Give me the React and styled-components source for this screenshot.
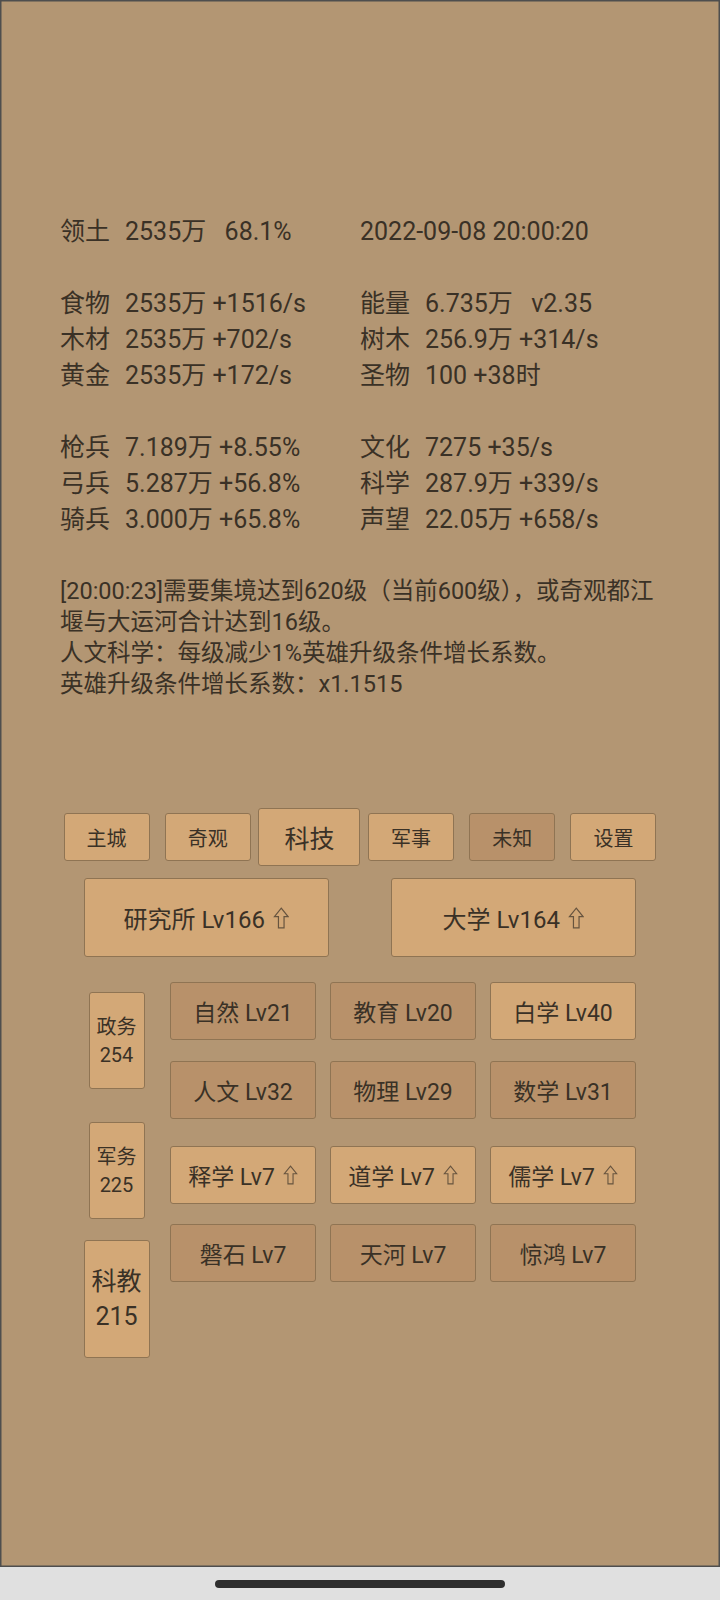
import React from 'react';
import styled, { createGlobalStyle } from 'styled-components';

const GlobalStyle = createGlobalStyle`
  html, body {
    margin: 0;
    padding: 0;
    background: #e0e0e0;
  }
  body {
    font-family: Roboto, "Noto Sans CJK SC", "Noto Sans", sans-serif;
    color: #3a3126;
  }
  * {
    box-sizing: border-box;
  }
`;

const Screen = styled.div`
  position: relative;
  width: 720px;
  height: 1567px;
  background: #b39673;
  box-shadow: inset 0 0 0 1.5px #4e4e4e;
  padding-top: 214px;
`;

const Stats = styled.div`
  padding-left: 60px;
  font-size: 25px;
  line-height: 36px;
`;

const StatRow = styled.div`
  display: grid;
  grid-template-columns: 300px 1fr;
  height: 36px;
`;

const Blank = styled.div`
  height: 36px;
`;

const Cell = styled.div`
  display: flex;
  white-space: pre;
`;

const Label = styled.span`
  width: 65px;
  flex: none;
`;

const Value = styled.span`
  word-spacing: ${p => (p.$wide ? '3px' : '0')};
`;

const Message = styled.div`
  margin: 38px 0 0 60px;
  font-size: 23.5px;
  line-height: 31px;
  white-space: nowrap;
`;

const Tabs = styled.div`
  margin: 108px 0 0 56px;
  width: 608px;
  height: 58px;
  display: grid;
  grid-template-columns: repeat(6, 1fr);
  align-items: center;
  justify-items: center;
`;

const Btn = styled.div`
  display: flex;
  align-items: center;
  justify-content: center;
  gap: 8px;
  background: ${p => (p.$dark ? '#b8916a' : '#d3a877')};
  border: 1px solid #8f7453;
  border-radius: 3px;
  color: #3a3126;
  white-space: nowrap;
`;

const Tab = styled(Btn)`
  width: ${p => (p.$active ? '102px' : '86px')};
  height: ${p => (p.$active ? '58px' : '48px')};
  font-size: ${p => (p.$active ? '25px' : '20px')};
`;

const BigRow = styled.div`
  margin-top: 12px;
  display: flex;
  justify-content: center;
  gap: 62px;
`;

const BigBtn = styled(Btn)`
  width: 245px;
  height: 79px;
  font-size: 24px;
`;

const Lower = styled.div`
  margin-top: 25px;
  display: flex;
  padding-left: 66px;
`;

const SideCol = styled.div`
  width: 101px;
  padding-top: 10px;
  display: flex;
  flex-direction: column;
  align-items: center;
`;

const SideBtn = styled(Btn)`
  flex-direction: column;
  gap: 0;
  width: ${p => (p.$big ? '66px' : '56px')};
  height: ${p => (p.$big ? '118px' : '97px')};
  margin-top: ${p => p.$mt || 0}px;
  font-size: ${p => (p.$big ? '25px' : '20px')};
  line-height: ${p => (p.$big ? '35px' : '28px')};
`;

const Groups = styled.div`
  margin-left: 3px;
  display: flex;
  flex-direction: column;
  gap: 27px;
`;

const Grid = styled.div`
  display: grid;
  grid-template-columns: repeat(3, 146px);
  column-gap: 14px;
  row-gap: ${p => p.$rowGap}px;
`;

const Skill = styled(Btn)`
  height: 58px;
  font-size: 23px;
`;

const HomeArea = styled.div`
  height: 33px;
  display: flex;
  justify-content: center;
  padding-top: 13px;
`;

const HomeBar = styled.div`
  width: 290px;
  height: 8px;
  border-radius: 4px;
  background: #2e2e2e;
`;

const UpArrow = ({ size = 22 }) => (
  <svg width={size * 0.75} height={size} viewBox="0 0 16 22" fill="none">
    <path
      d="M8 1.2 L14.8 9.6 L10.8 9.6 L10.8 20.8 L5.2 20.8 L5.2 9.6 L1.2 9.6 Z"
      stroke="#67543f"
      strokeWidth="1.2"
    />
  </svg>
);

const stats = [
  [['领土', '2535万  68.1%'], ['', '2022-09-08 20:00:20']],
  null,
  [['食物', '2535万 +1516/s'], ['能量', '6.735万  v2.35']],
  [['木材', '2535万 +702/s'], ['树木', '256.9万 +314/s']],
  [['黄金', '2535万 +172/s'], ['圣物', '100 +38时']],
  null,
  [['枪兵', '7.189万 +8.55%'], ['文化', '7275 +35/s']],
  [['弓兵', '5.287万 +56.8%'], ['科学', '287.9万 +339/s']],
  [['骑兵', '3.000万 +65.8%'], ['声望', '22.05万 +658/s']],
];

const tabs = [
  { name: '主城' },
  { name: '奇观' },
  { name: '科技', active: true },
  { name: '军事' },
  { name: '未知', dark: true },
  { name: '设置' },
];

const group1 = [
  { name: '自然 Lv21', dark: true },
  { name: '教育 Lv20', dark: true },
  { name: '白学 Lv40' },
  { name: '人文 Lv32', dark: true },
  { name: '物理 Lv29', dark: true },
  { name: '数学 Lv31', dark: true },
];

const group2 = [
  { name: '释学 Lv7', up: true },
  { name: '道学 Lv7', up: true },
  { name: '儒学 Lv7', up: true },
  { name: '磐石 Lv7', dark: true },
  { name: '天河 Lv7', dark: true },
  { name: '惊鸿 Lv7', dark: true },
];

const StatCell = ({ item }) => (
  <Cell>
    {item[0] ? <Label>{item[0]}</Label> : null}
    <Value $wide={item[1].includes('  ')}>{item[1]}</Value>
  </Cell>
);

export default function App() {
  return (
    <>
      <GlobalStyle />
      <Screen>
        <Stats>
          {stats.map((row, i) =>
            row ? (
              <StatRow key={i}>
                <StatCell item={row[0]} />
                <StatCell item={row[1]} />
              </StatRow>
            ) : (
              <Blank key={i} />
            )
          )}
        </Stats>

        <Message>
          [20:00:23]需要集境达到620级（当前600级），或奇观都江
          <br />
          堰与大运河合计达到16级。
          <br />
          人文科学：每级减少1%英雄升级条件增长系数。
          <br />
          英雄升级条件增长系数：x1.1515
        </Message>

        <Tabs>
          {tabs.map(t => (
            <Tab key={t.name} $active={t.active} $dark={t.dark}>
              {t.name}
            </Tab>
          ))}
        </Tabs>

        <BigRow>
          <BigBtn>
            研究所 Lv166 <UpArrow />
          </BigBtn>
          <BigBtn>
            大学 Lv164 <UpArrow />
          </BigBtn>
        </BigRow>

        <Lower>
          <SideCol>
            <SideBtn>
              <span>政务</span>
              <span>254</span>
            </SideBtn>
            <SideBtn $mt={33}>
              <span>军务</span>
              <span>225</span>
            </SideBtn>
            <SideBtn $mt={21} $big>
              <span>科教</span>
              <span>215</span>
            </SideBtn>
          </SideCol>
          <Groups>
            <Grid $rowGap={21}>
              {group1.map(s => (
                <Skill key={s.name} $dark={s.dark}>
                  {s.name}
                </Skill>
              ))}
            </Grid>
            <Grid $rowGap={20}>
              {group2.map(s => (
                <Skill key={s.name} $dark={s.dark}>
                  {s.name}
                  {s.up ? <UpArrow size={20} /> : null}
                </Skill>
              ))}
            </Grid>
          </Groups>
        </Lower>
      </Screen>
      <HomeArea>
        <HomeBar />
      </HomeArea>
    </>
  );
}
